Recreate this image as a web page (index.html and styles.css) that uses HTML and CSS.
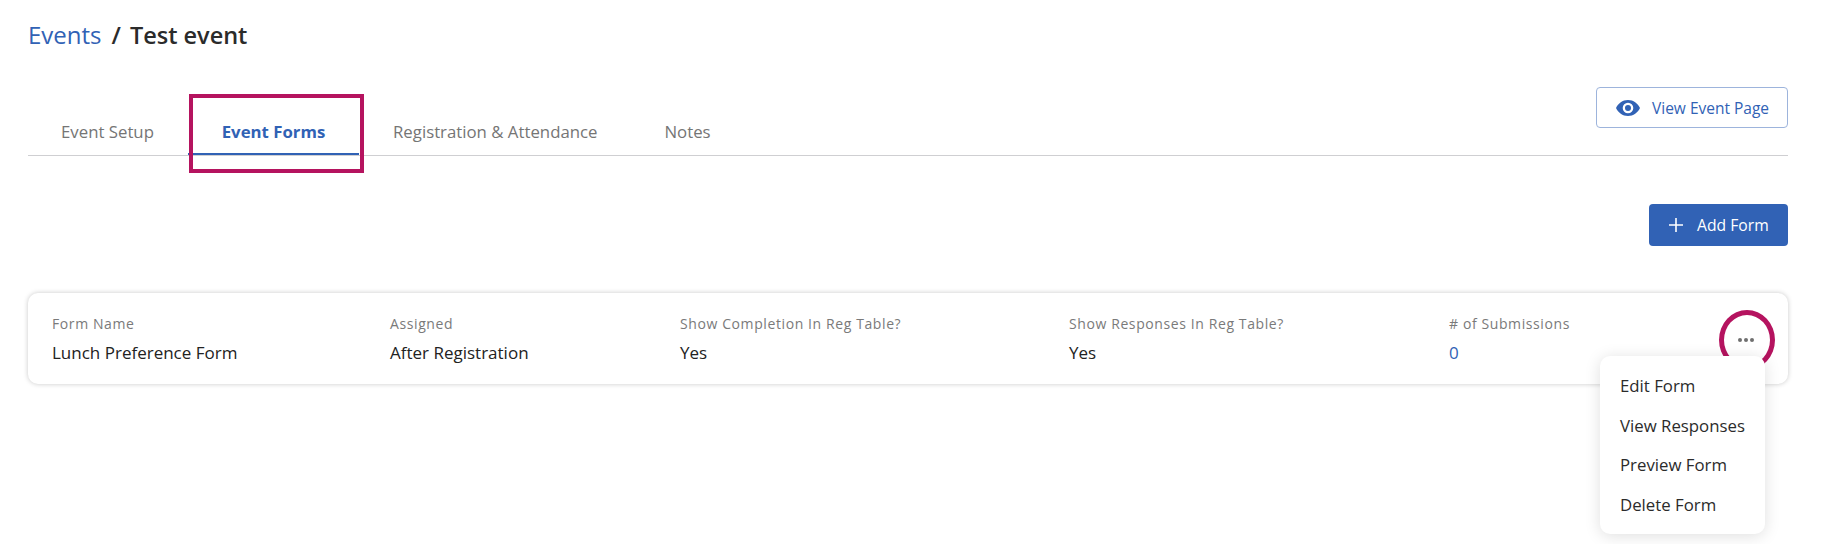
FILE: index.html
```html
<!DOCTYPE html>
<html lang="en">
<head>
<meta charset="utf-8">
<title>Test event</title>
<link rel="stylesheet" href="styles.css">
</head>
<body>
<main class="page">
  <h1 class="crumbs"><a class="crumb-link">Events</a><span class="crumb-sep">/</span><span class="crumb-current">Test event</span></h1>
  <div class="tabbar">
    <nav class="tabs">
      <a class="tab tab-first">Event Setup</a>
      <a class="tab tab-active">Event Forms<span class="mark-box"></span></a>
      <a class="tab tab-reg">Registration &amp; Attendance</a>
      <a class="tab tab-notes">Notes</a>
    </nav>
    <button class="btn btn-outline">
      <svg class="eye" viewBox="0 0 24 16" width="24" height="16"><path fill="#3162b5" fill-rule="evenodd" d="M12 0C6.5 0 2.300 3.300 0 8c2.300 4.700 6.500 8 12 8s9.700-3.300 12-8c-2.300-4.700-6.500-8-12-8zm0 13.300A5.300 5.300 0 1 1 12 2.700a5.300 5.300 0 0 1 0 10.600zM12 5a3 3 0 1 0 0 6 3 3 0 0 0 0-6z"/></svg>
      View Event Page
    </button>
  </div>
  <div class="actions">
    <button class="btn btn-solid">
      <svg class="plus" viewBox="0 0 14 14" width="14" height="14"><path stroke="#fff" stroke-width="1.600" fill="none" d="M7 0v14M0 7h14"/></svg>
      Add Form
    </button>
  </div>
  <section class="card">
    <div class="col col-name"><span class="label">Form Name</span><span class="value">Lunch Preference Form</span></div>
    <div class="col col-assigned"><span class="label">Assigned</span><span class="value">After Registration</span></div>
    <div class="col col-completion"><span class="label">Show Completion In Reg Table?</span><span class="value">Yes</span></div>
    <div class="col col-responses"><span class="label">Show Responses In Reg Table?</span><span class="value">Yes</span></div>
    <div class="col col-subs"><span class="label"># of Submissions</span><span class="value value-link">0</span></div>
    <div class="more">
      <span class="dots"><i></i><i></i><i></i></span>
      <span class="mark-circle"></span>
    </div>
    <ul class="menu">
      <li>Edit Form</li>
      <li>View Responses</li>
      <li>Preview Form</li>
      <li>Delete Form</li>
    </ul>
  </section>
</main>
</body>
</html>
```
FILE: styles.css
```css
* { box-sizing: border-box; }
html, body { margin: 0; padding: 0; background: #fff; }
body { font-family: "Open Sans", "Liberation Sans", sans-serif; color: #2b2b2b; overflow: hidden; height: 544px; }
.page { padding: 0 55px 0 28px; }
.crumbs { margin: 0; padding-top: 17px; height: 87px; font-size: 24px; line-height: 36px; font-weight: 400; display: flex; }
.crumb-link { color: #3162b5; }
.crumb-sep { margin: 0 9px 0 10px; font-weight: 600; }
.crumb-current { font-weight: 600; font-size: 23.5px; }
.tabbar { display: flex; justify-content: space-between; align-items: flex-start; border-bottom: 1px solid #cfcfd2; height: 69px; }
.tabs { display: flex; height: 68px; padding-top: 33px; }
.tab { display: block; position: relative; font-size: 16.8px; line-height: 24px; color: #757575; height: 35px; white-space: nowrap; }
.tab-first { width: 160px; padding-left: 33px; }
.tab-active { width: 171px; text-align: center; color: #3162b5; font-weight: 700; border-bottom: 2px solid #3162b5; }
.tab-reg { margin-left: 34px; }
.tab-notes { margin-left: 67px; }
.mark-box { position: absolute; left: 1px; top: -26px; width: 175px; height: 79px; border: 4px solid #b5135f; }
.btn { font-family: inherit; display: flex; align-items: center; border-radius: 4px; cursor: pointer; white-space: nowrap; }
.btn-outline { font-size: 15.5px; width: 192px; height: 41px; background: #fff; color: #3162b5; border: 1px solid #9db4dc; padding: 0 0 0 19px; gap: 12px; }
.actions { display: flex; justify-content: flex-end; padding-top: 48px; height: 137px; }
.btn-solid { font-size: 15.7px; width: 139px; height: 42px; background: #3162b5; color: #fff; border: 0; padding: 0 0 0 20px; gap: 14px; }
.card { position: relative; display: flex; height: 91px; background: #fff; border-radius: 10px; box-shadow: 0 0 5px rgba(0,0,0,.22); padding: 20px 0 0 24px; }
.col { display: flex; flex-direction: column; }
.col-name { width: 338px; }
.col-assigned { width: 290px; }
.col-completion { width: 389px; }
.col-responses { width: 380px; }
.label { font-size: 14px; line-height: 21px; letter-spacing: .6px; color: #7a7a7a; }
.value { font-size: 17px; line-height: 24px; margin-top: 7px; color: #222; }
.value-link { color: #3162b5; }
.more { position: absolute; right: 13px; top: 17px; width: 56px; height: 60px; display: flex; align-items: center; justify-content: center; }
.dots { display: flex; gap: 2px; margin-right: 3px; }
.dots i { width: 4px; height: 4px; border-radius: 50%; background: #6f6f6f; }
.mark-circle { position: absolute; inset: 0; border: 5px solid #b5135f; border-radius: 50%; }
.menu { position: absolute; left: 1572px; top: 63px; width: 165px; height: 178px; margin: 0; padding: 18px 0 0 20px; list-style: none; background: #fff; border-radius: 10px; box-shadow: 0 2px 16px rgba(0,0,0,.13); }
.menu li { font-size: 16.8px; line-height: 24px; height: 39.500px; color: #2b2b2b; white-space: nowrap; }
```
